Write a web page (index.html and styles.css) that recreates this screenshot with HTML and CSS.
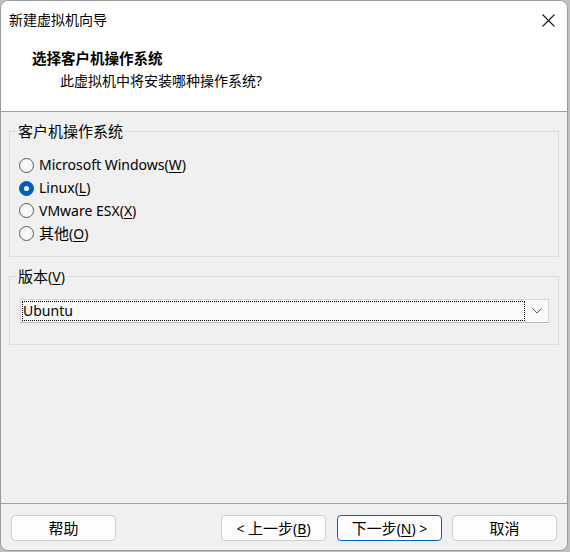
FILE: index.html
```html
<!DOCTYPE html>
<html lang="zh-CN">
<head>
<meta charset="utf-8">
<title>新建虚拟机向导</title>
<link rel="stylesheet" href="styles.css">
</head>
<body>
<div class="window">
  <div class="top">
    <div class="titlebar">
      <span class="title">新建虚拟机向导</span>
      <svg class="close" width="13" height="13" viewBox="0 0 13 13"><path d="M0.5 0.5 L12.5 12.5 M12.5 0.5 L0.5 12.5" stroke="#1a1a1a" stroke-width="1.1" fill="none"/></svg>
    </div>
    <div class="heading">选择客户机操作系统</div>
    <div class="subtitle">此虚拟机中将安装哪种操作系统?</div>
  </div>
  <div class="content">
    <div class="group group-os">
      <div class="legend"><span class="cjk">客户机操作系统</span></div>
      <div class="radios">
        <div class="radio-row"><span class="radio"></span><span class="label">Microsoft Windows(<u>W</u>)</span></div>
        <div class="radio-row"><span class="radio checked"></span><span class="label">Linux(<u>L</u>)</span></div>
        <div class="radio-row"><span class="radio"></span><span class="label">VMware ESX(<u>X</u>)</span></div>
        <div class="radio-row"><span class="radio"></span><span class="label"><span class="cjk">其他</span>(<u>O</u>)</span></div>
      </div>
    </div>
    <div class="group group-version">
      <div class="legend"><span class="cjk">版本</span>(<u>V</u>)</div>
      <div class="combo">
        <div class="combo-value">Ubuntu</div>
        <div class="combo-arrow">
          <svg width="10" height="6" viewBox="0 0 10 6"><path d="M0.5 0.5 L5 5 L9.5 0.5" stroke="#606060" stroke-width="1" fill="none"/></svg>
        </div>
      </div>
    </div>
  </div>
  <div class="footer">
    <button class="btn"><span class="cjk">帮助</span></button>
    <div class="spacer"></div>
    <button class="btn">&lt; <span class="cjk">上一步</span>(<u>B</u>)</button>
    <button class="btn btn-default"><span class="cjk">下一步</span>(<u>N</u>) &gt;</button>
    <button class="btn btn-cancel"><span class="cjk">取消</span></button>
  </div>
</div>
</body>
</html>
```

FILE: styles.css
```css
* { box-sizing: border-box; }

body {
  margin: 0;
  background: #bfbfbf;
  font-family: "Noto Sans", "Noto Sans CJK SC", sans-serif;
  font-size: 14px;
  color: #000;
}

.cjk {
  font-size: 15px;
}

.window {
  width: 568px;
  height: 551px;
  border: 1px solid #9a9a9a;
  border-radius: 8px;
  background: #f0f0f0;
  display: flex;
  flex-direction: column;
  overflow: hidden;
}

.top {
  background: #fff;
  height: 111px;
  border-bottom: 1px solid #a0a0a0;
  flex: none;
}

.titlebar {
  height: 38px;
  display: flex;
  align-items: center;
  justify-content: space-between;
  padding: 0 12px 0 8px;
}

.title {
  line-height: 20px;
}

.close { display: block; }

.heading {
  font-weight: bold;
  font-size: 14.5px;
  line-height: 20px;
  margin-top: 9px;
  padding-left: 31px;
}

.subtitle {
  line-height: 20px;
  margin-top: 3px;
  padding-left: 59px;
}

.content {
  padding: 0 8px;
  flex: 1;
}

.group {
  border: 1px solid #dcdcdc;
}

.group-os {
  margin-top: 19px;
  height: 126px;
}

.group-version {
  margin-top: 19px;
  height: 69px;
}

.legend {
  display: block;
  width: max-content;
  margin: -11px 0 0 6px;
  padding: 0 2px;
  height: 20px;
  line-height: 20px;
  background: #f0f0f0;
}

.radios {
  margin-top: 13px;
}

.radio-row {
  height: 22.7px;
  display: flex;
  align-items: center;
}

.radio {
  width: 15px;
  height: 15px;
  margin-left: 9px;
  border: 1px solid #5a5a5a;
  border-radius: 50%;
  background: #f7f7f7;
  position: relative;
  flex: none;
}

.radio.checked {
  background: #005fb8;
  border-color: #005fb8;
}

.radio.checked::after {
  content: "";
  position: absolute;
  left: 4px;
  top: 4px;
  width: 5px;
  height: 5px;
  border-radius: 50%;
  background: #fff;
}

.label {
  margin-left: 5px;
  line-height: 20px;
}

u { text-underline-offset: 2px; }

.combo {
  margin: 13px 9px 0 10px;
  height: 24px;
  display: flex;
  border: 1px solid #d6d6d6;
  border-bottom-color: #bcbcbc;
  background: #f8f9f9;
}

.combo-value {
  flex: 1;
  margin: 1px 0 1px 1px;
  border: 1px dotted #000;
  line-height: 18px;
  padding-left: 0;
}

.combo-arrow {
  width: 23px;
  display: flex;
  align-items: center;
  justify-content: center;
}

.combo-arrow svg { display: block; }

.footer {
  flex: none;
  border-top: 1px solid #a0a0a0;
  padding: 11px 10px 9px 10px;
  display: flex;
  height: 47px;
}

.spacer { flex: 1; }

.btn {
  width: 105px;
  height: 26px;
  border: 1px solid #d0d0d0;
  border-radius: 4px;
  background: #fdfdfd;
  font: inherit;
  color: #000;
  line-height: 22px;
  padding: 0;
  margin-left: 11px;
}

.btn:first-child { margin-left: 0; }

.btn-default {
  border-color: #0067c0;
}

.btn-cancel {
  margin-left: 10px;
}
```
